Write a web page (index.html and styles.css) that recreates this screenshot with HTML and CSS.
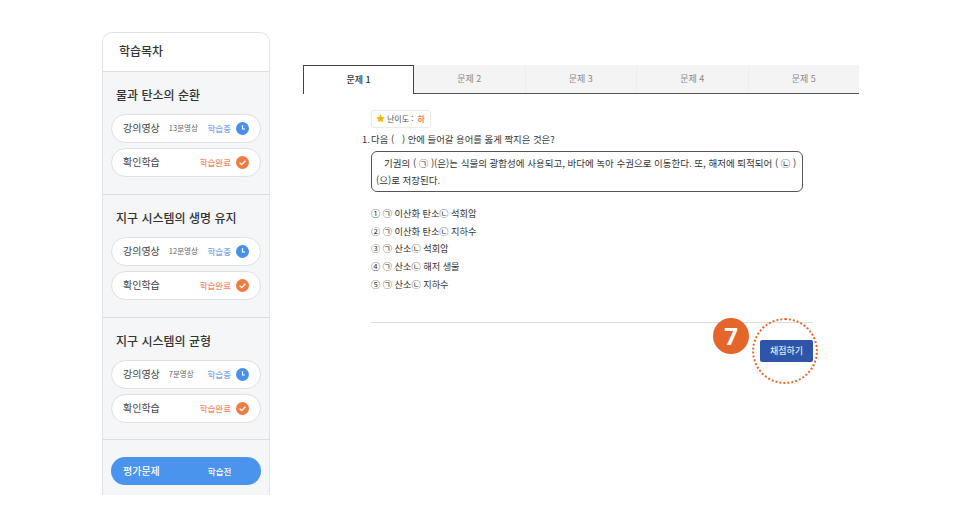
FILE: index.html
```html
<!DOCTYPE html>
<html lang="ko">
<head>
<meta charset="utf-8">
<title>학습목차</title>
<link rel="stylesheet" href="styles.css">
</head>
<body>
<div class="page">
  <aside class="sidebar">
    <h1 class="side-head">학습목차</h1>
    <section class="unit">
      <h2 class="unit-title">물과 탄소의 순환</h2>
      <div class="pill"><span class="pill-name">강의영상</span><span class="pill-time">13분영상</span><span class="pill-state blue">학습중</span><svg class="ico" viewBox="0 0 13 13"><circle cx="6.5" cy="6.5" r="6.5" fill="#4a90e8"/><path d="M6.5 3.2V7H9" fill="none" stroke="#fff" stroke-width="1.2"/></svg></div>
      <div class="pill"><span class="pill-name">확인학습</span><span class="pill-state orange">학습완료</span><svg class="ico" viewBox="0 0 13 13"><circle cx="6.5" cy="6.5" r="6.5" fill="#f07c45"/><path d="M3.6 6.6L5.7 8.6L9.5 4.8" fill="none" stroke="#fff" stroke-width="1.3"/></svg></div>
    </section>
    <section class="unit">
      <h2 class="unit-title">지구 시스템의 생명 유지</h2>
      <div class="pill"><span class="pill-name">강의영상</span><span class="pill-time">12분영상</span><span class="pill-state blue">학습중</span><svg class="ico" viewBox="0 0 13 13"><circle cx="6.5" cy="6.5" r="6.5" fill="#4a90e8"/><path d="M6.5 3.2V7H9" fill="none" stroke="#fff" stroke-width="1.2"/></svg></div>
      <div class="pill"><span class="pill-name">확인학습</span><span class="pill-state orange">학습완료</span><svg class="ico" viewBox="0 0 13 13"><circle cx="6.5" cy="6.5" r="6.5" fill="#f07c45"/><path d="M3.6 6.6L5.7 8.6L9.5 4.8" fill="none" stroke="#fff" stroke-width="1.3"/></svg></div>
    </section>
    <section class="unit unit-last">
      <h2 class="unit-title">지구 시스템의 균형</h2>
      <div class="pill"><span class="pill-name">강의영상</span><span class="pill-time">7분영상</span><span class="pill-state blue">학습중</span><svg class="ico" viewBox="0 0 13 13"><circle cx="6.5" cy="6.5" r="6.5" fill="#4a90e8"/><path d="M6.5 3.2V7H9" fill="none" stroke="#fff" stroke-width="1.2"/></svg></div>
      <div class="pill"><span class="pill-name">확인학습</span><span class="pill-state orange">학습완료</span><svg class="ico" viewBox="0 0 13 13"><circle cx="6.5" cy="6.5" r="6.5" fill="#f07c45"/><path d="M3.6 6.6L5.7 8.6L9.5 4.8" fill="none" stroke="#fff" stroke-width="1.3"/></svg></div>
    </section>
    <div class="final">
      <div class="final-pill"><span class="final-name">평가문제</span><span class="final-state">학습전</span></div>
    </div>
  </aside>
  <main class="main">
    <nav class="tabs">
      <div class="tab active">문제 1</div>
      <div class="tab">문제 2</div>
      <div class="tab">문제 3</div>
      <div class="tab">문제 4</div>
      <div class="tab">문제 5</div>
    </nav>
    <div class="quiz">
      <div class="level"><svg class="star" viewBox="0 0 10 10"><path d="M5 .4L6.4 3.4L9.7 3.8L7.3 6L7.9 9.3L5 7.7L2.1 9.3L2.7 6L.3 3.8L3.6 3.4Z" fill="#f5b50f"/></svg><span>난이도 :</span><b class="level-val">하</b></div>
      <p class="question"><span class="q-no">1.</span>다음 (  &nbsp; ) 안에 들어갈 용어를 옳게 짝지은 것은?</p>
      <div class="passage"><span class="p-line p-indent">기권의 ( ㉠ )(은)는 식물의 광합성에 사용되고, 바다에 녹아 수권으로 이동한다. 또, 해저에 퇴적되어 ( ㉡ )</span><span class="p-line">(으)로 저장된다.</span></div>
      <ol class="choices">
        <li>① ㉠ 이산화 탄소㉡ 석회암</li>
        <li>② ㉠ 이산화 탄소㉡ 지하수</li>
        <li>③ ㉠ 산소㉡ 석회암</li>
        <li>④ ㉠ 산소㉡ 해저 생물</li>
        <li>⑤ ㉠ 산소㉡ 지하수</li>
      </ol>
      <div class="actions">
        <button class="submit">채점하기</button>
        <span class="ring"></span>
        <span class="badge">7</span>
      </div>
    </div>
  </main>
</div>
</body>
</html>
```
FILE: styles.css
```css
* { box-sizing: border-box; }
html, body { margin: 0; padding: 0; background: #fff; }
body { width: 960px; height: 530px; overflow: hidden; font-family: "Noto Sans CJK KR", "Noto Sans", sans-serif; color: #333; }
.page { display: flex; align-items: flex-start; padding: 32px 0 0 102px; }

.sidebar { width: 168px; height: 463px; flex: none; background: #f5f6f8; border: 1px solid #e2e3e6; border-bottom: 0; border-radius: 10px 10px 0 0; overflow: hidden; }
.side-head { height: 39px; margin: 0; padding-left: 16px; background: #fff; font-size: 12px; font-weight: 500; line-height: 36px; color: #333; border-bottom: 1px solid #dcdde0; }
.unit { height: 123px; padding: 14px 8px 0; border-bottom: 1px solid #dcdde0; }
.unit-last { height: 122px; }
.unit-title { margin: 0 0 10px 5px; font-size: 12px; font-weight: 500; line-height: 18px; color: #333; }
.pill { display: flex; align-items: center; height: 29px; margin-bottom: 5px; padding: 0 11px; background: #fff; border: 1.5px solid #dedfe2; border-radius: 15px; }
.pill-name { padding-bottom: 2px; font-size: 10px; color: #444; }
.pill-time { margin-left: 9px; padding-bottom: 2px; font-size: 7.5px; color: #666; }
.pill-state { margin-left: auto; margin-right: 5px; padding-bottom: 2px; font-size: 8.5px; font-weight: 500; }
.blue { color: #7ea9ee; }
.orange { color: #f58d70; }
.ico { width: 13px; height: 13px; flex: none; }

.final { padding: 17px 8px 0; }
.final-pill { display: flex; align-items: center; height: 28px; padding: 0 12px 1px; background: #4a94ee; border-radius: 14px; color: #fff; }
.final-name { font-size: 10px; font-weight: 500; }
.final-state { margin-left: 48px; font-size: 8.5px; font-weight: 500; }

.main { width: 556px; margin: 33px 0 0 33px; flex: none; }
.tabs { display: flex; height: 29px; border-bottom: 1px solid #555; }
.tab { flex: 1; display: flex; align-items: center; justify-content: center; padding-bottom: 2px; background: #f4f4f4; font-size: 9px; color: #8a8a8a; border-right: 1px solid #eeeeee; }
.tab:last-child { border-right: 0; }
.active { flex: none; width: 111px; height: 29px; background: #fff; color: #333; font-weight: 500; border: 1px solid #444; border-bottom: 0; }

.quiz { padding: 16px 0 0 68px; width: 510px; margin-top: -6px; }
.level { display: inline-flex; align-items: center; height: 18px; padding: 0 5px 0 4px; border: 1px solid #eceae5; border-radius: 3px; font-size: 8px; color: #555; background: #fff; }
.star { width: 9px; height: 9px; margin-right: 2px; }
.level-val { margin-left: 4px; color: #f07c55; font-weight: 700; }
.question { position: relative; margin: 3px 0 4px 0; font-size: 9.4px; line-height: 16px; color: #333; }
.q-no { position: absolute; left: -9px; }
.passage { width: 432px; height: 41px; padding: 3px 4px; border: 1px solid #555; border-radius: 6px; font-size: 9.5px; color: #333; }
.p-line { display: block; height: 17px; line-height: 17px; white-space: nowrap; }
.p-indent { padding-left: 8px; }
.choices { margin: 13px 0 0; padding: 0; list-style: none; font-size: 9.2px; line-height: 17.7px; color: #333; }
.actions { position: relative; height: 62px; margin-top: 28px; border-top: 1px solid #dcdcdc; width: 442px; }
.submit { position: absolute; right: 0; top: 17px; width: 53px; height: 22px; background: #2f55a8; border: 0; border-radius: 2px; color: #dfe5f3; font: 500 9px "Noto Sans CJK KR", sans-serif; padding: 0; }
.ring { position: absolute; right: -5px; top: -5px; width: 66px; height: 66px; border: 2px dotted #e8662c; border-radius: 50%; }
.badge { position: absolute; left: 342px; top: -5px; width: 36px; height: 36px; border-radius: 50%; background: #e4662a; color: #fff; font: 700 24px/36px "Open Sans", sans-serif; text-align: center; }
```
